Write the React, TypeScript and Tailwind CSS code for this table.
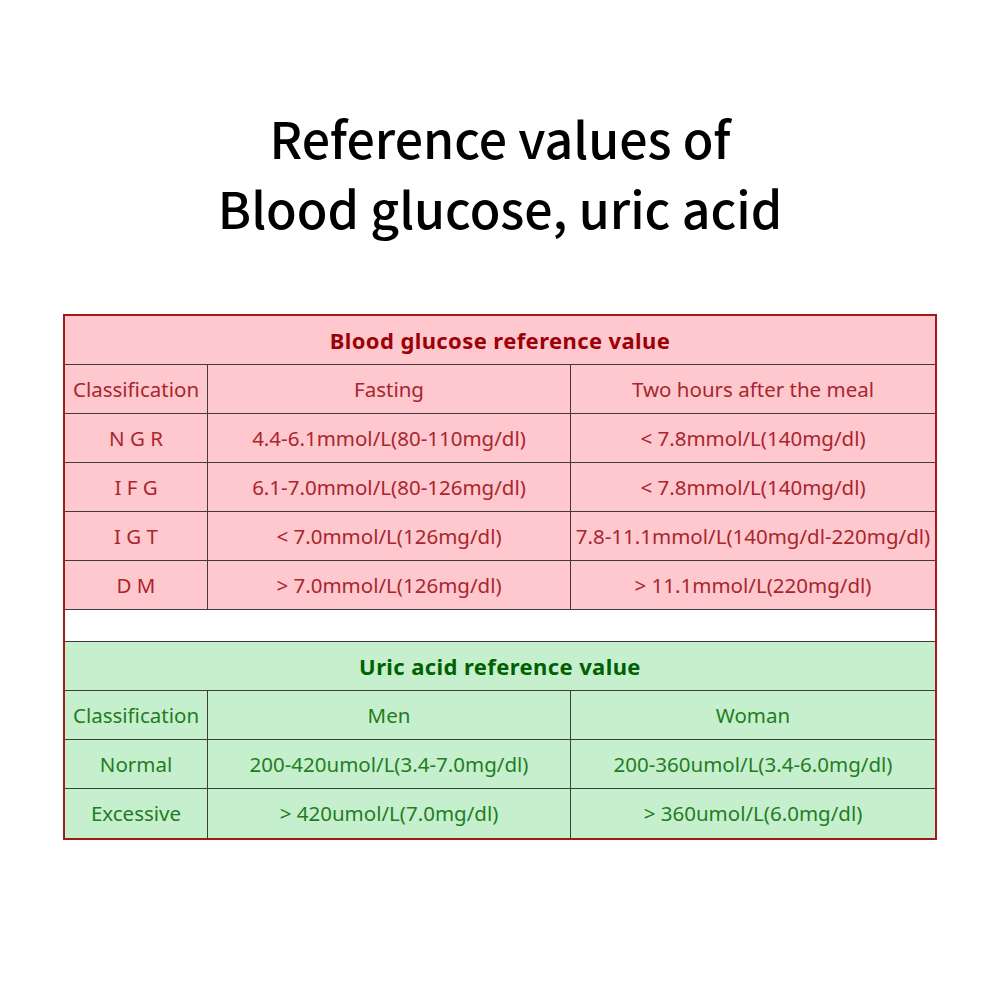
import React from 'react';

type Row = [string, string, string];

const glucoseRows: Row[] = [
  ['Classification', 'Fasting', 'Two hours after the meal'],
  ['N G R', '4.4-6.1mmol/L(80-110mg/dl)', '< 7.8mmol/L(140mg/dl)'],
  ['I F G', '6.1-7.0mmol/L(80-126mg/dl)', '< 7.8mmol/L(140mg/dl)'],
  ['I G T', '< 7.0mmol/L(126mg/dl)', '7.8-11.1mmol/L(140mg/dl-220mg/dl)'],
  ['D M', '> 7.0mmol/L(126mg/dl)', '> 11.1mmol/L(220mg/dl)'],
];

const uricRows: Row[] = [
  ['Classification', 'Men', 'Woman'],
  ['Normal', '200-420umol/L(3.4-7.0mg/dl)', '200-360umol/L(3.4-6.0mg/dl)'],
  ['Excessive', '> 420umol/L(7.0mg/dl)', '> 360umol/L(6.0mg/dl)'],
];

function DataRow({ row, tone, last }: { row: Row; tone: 'red' | 'green'; last?: boolean }) {
  const bg = tone === 'red' ? 'bg-[#ffc7ce] text-[#a8262c]' : 'bg-[#c6efce] text-[#1f7d22]';
  return (
    <div className={`flex h-[49px] ${bg} ${last ? '' : 'border-b border-[#3d3d3d]'}`}>
      <div className="w-[143px] shrink-0 flex items-center justify-center border-r border-[#3d3d3d] whitespace-nowrap">
        {row[0]}
      </div>
      <div className="w-[363px] shrink-0 flex items-center justify-center border-r border-[#3d3d3d] whitespace-nowrap">
        {row[1]}
      </div>
      <div className="flex-1 flex items-center justify-center whitespace-nowrap">{row[2]}</div>
    </div>
  );
}

export default function App() {
  return (
    <div className="w-[1000px] h-[1000px] bg-white">
      <h1
        className="pt-[102px] text-center text-[50px] leading-[70px] font-medium text-black"
        style={{ fontFamily: '"Noto Sans CJK SC", "Noto Sans", sans-serif' }}
      >
        Reference values of
        <br />
        Blood glucose, uric acid
      </h1>

      <div
        className="mx-auto mt-[72px] w-[874px] border-2 border-[#a31a1a] text-[20.5px]"
        style={{ fontFamily: '"Noto Sans", "Liberation Sans", sans-serif' }}
      >
        <div className="h-[49px] flex items-center justify-center border-b border-[#3d3d3d] bg-[#ffc7ce] text-[#9c0006] font-bold text-[22px] tracking-[0.4px]">
          Blood glucose reference value
        </div>
        {glucoseRows.map((row) => (
          <DataRow key={row[0]} row={row} tone="red" />
        ))}
        <div className="h-[32px] bg-white border-b border-[#3d3d3d]" />
        <div className="h-[49px] flex items-center justify-center border-b border-[#3d3d3d] bg-[#c6efce] text-[#006100] font-bold text-[22px] tracking-[0.4px]">
          Uric acid reference value
        </div>
        {uricRows.map((row, i) => (
          <DataRow key={row[0]} row={row} tone="green" last={i === uricRows.length - 1} />
        ))}
      </div>
    </div>
  );
}
